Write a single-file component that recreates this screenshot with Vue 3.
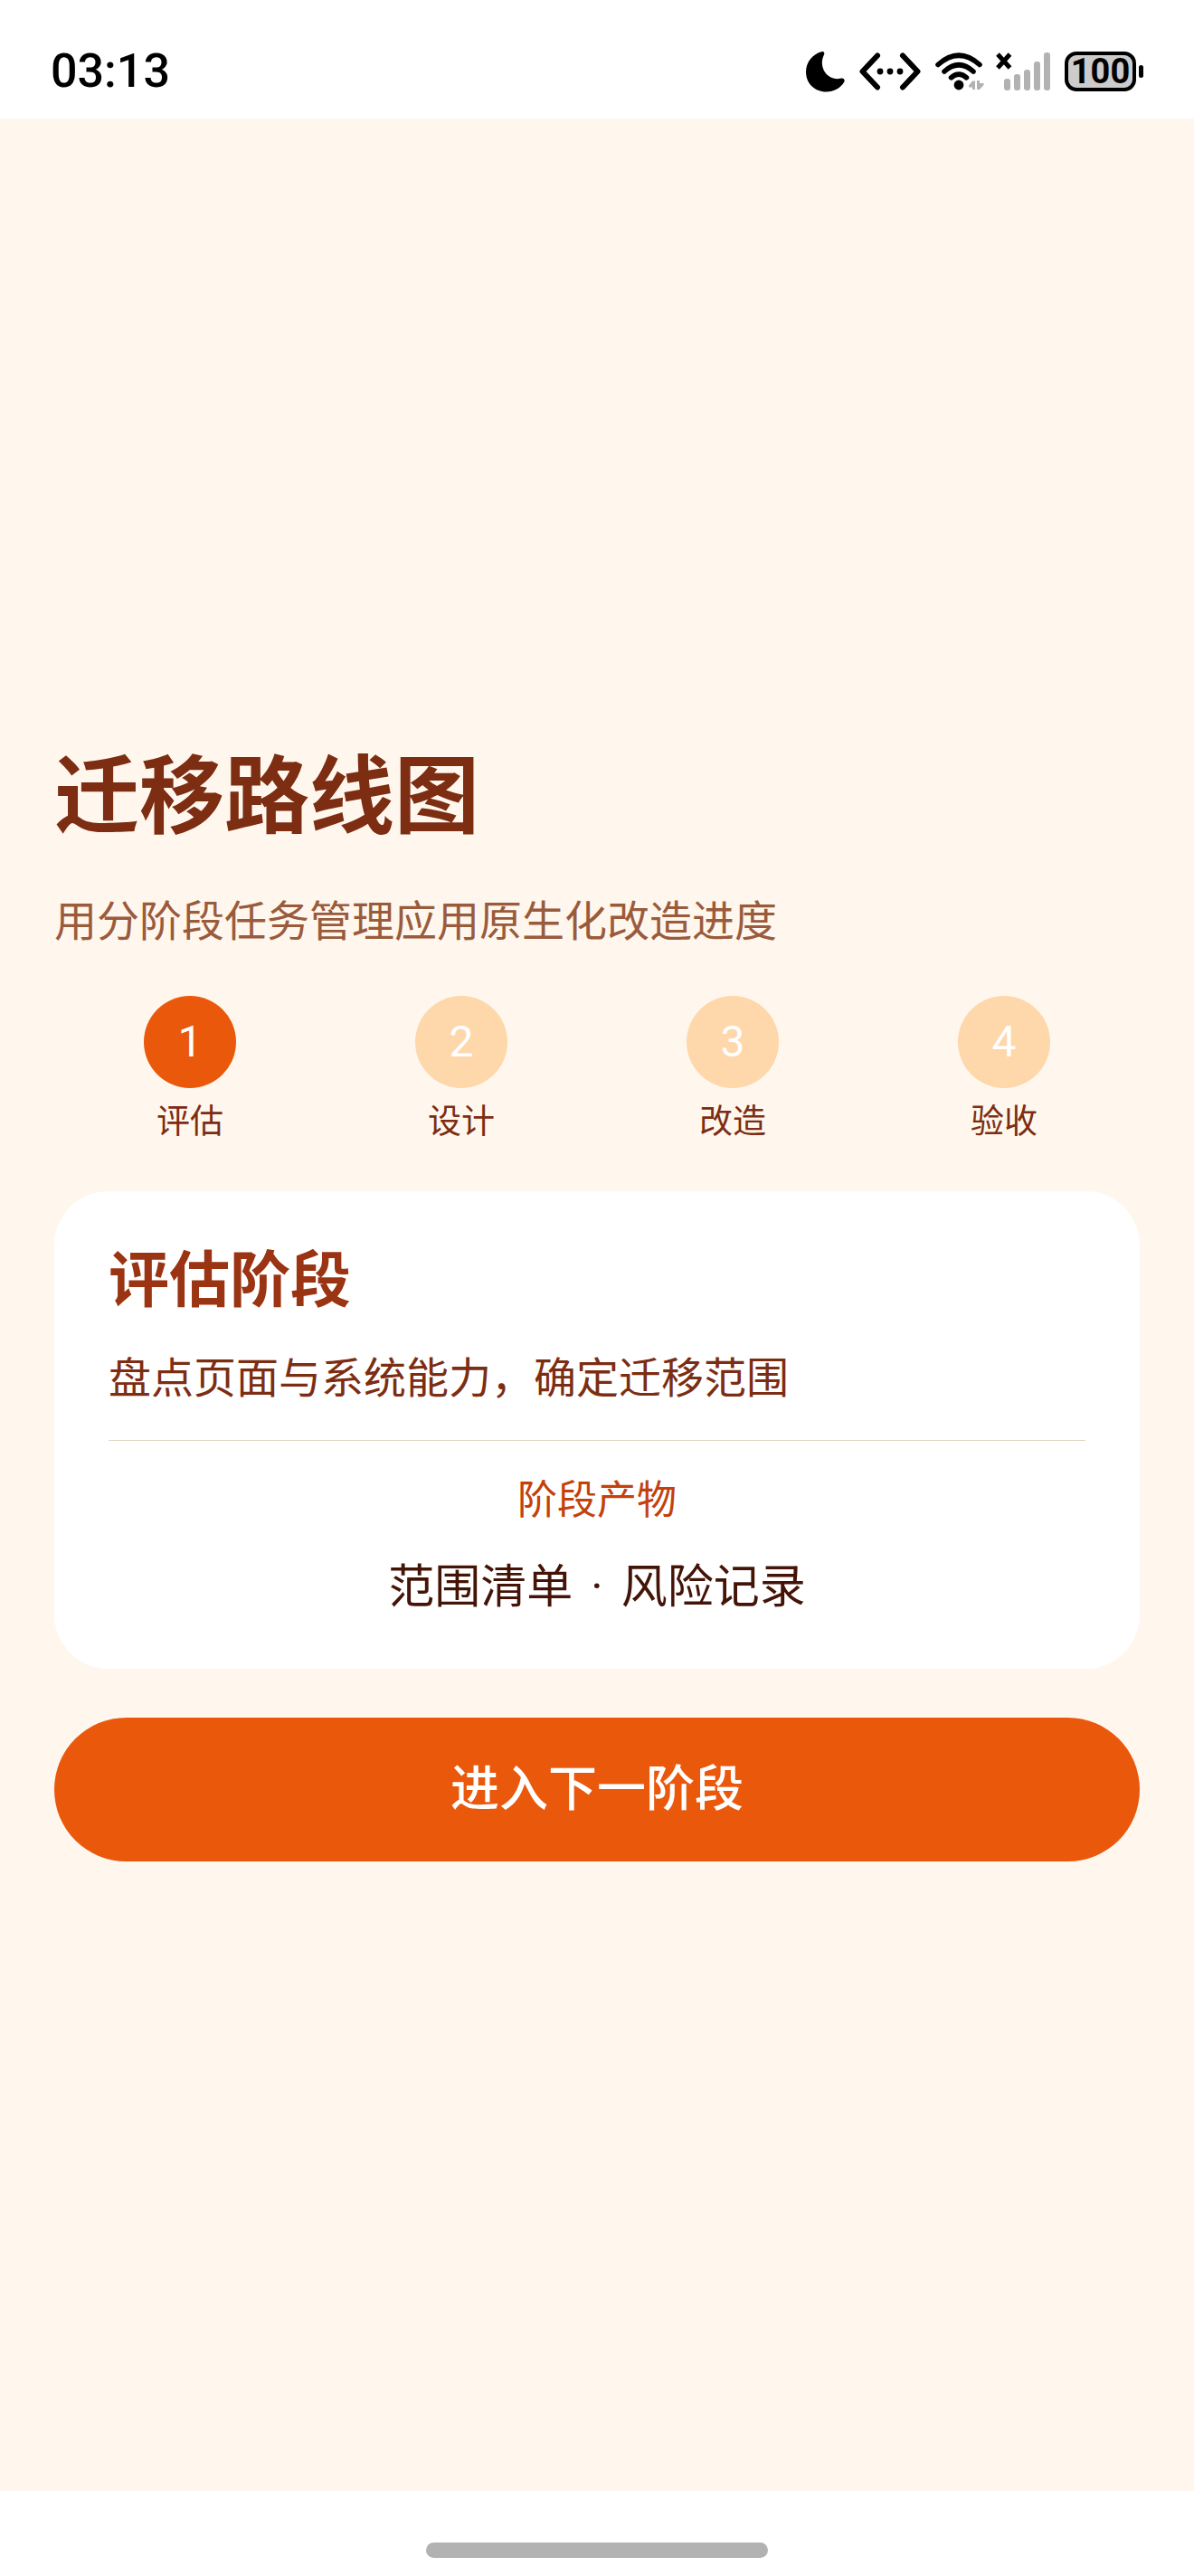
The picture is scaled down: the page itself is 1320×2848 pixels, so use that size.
<script setup>
import { ref, computed } from 'vue'

const stages = [
  { name: '评估', desc: '盘点页面与系统能力，确定迁移范围', outputs: ['范围清单', '风险记录'] },
  { name: '设计', desc: '梳理架构与交互，形成设计方案', outputs: ['架构方案', '交互规范'] },
  { name: '改造', desc: '按模块完成原生化改造', outputs: ['功能代码', '测试用例'] },
  { name: '验收', desc: '验证功能与性能，确认上线', outputs: ['验收报告', '发布清单'] },
]
const current = ref(0)
const stage = computed(() => stages[current.value])

function next() {
  current.value = (current.value + 1) % stages.length
}
</script>

<template>
  <div class="screen">
    <header class="status">
      <time class="clock">03:13</time>
      <div class="indicators">
        <svg class="moon" width="44" height="46" viewBox="0 0 44 46" aria-hidden="true">
          <path d="M18 1.200 C20.500 .3 22 2 21 4.500 C14 19 25 33.500 39 30.800 C42.500 30 44.500 31.800 43.300 34.600 C39.500 41.500 32 45.500 23.500 45.500 C10.500 45.500 1 36 1 23.500 C1 13 8 4 18 1.200Z" />
        </svg>
        <svg class="link" width="68" height="42" viewBox="0 0 68 42" aria-hidden="true">
          <path class="stroke" d="M20 3.500 L3.500 21 L20 38.500 M48 3.500 L64.500 21 L48 38.500" stroke-width="6" />
          <circle cx="23" cy="21" r="3.400" /><circle cx="34" cy="21" r="3.400" /><circle cx="45" cy="21" r="3.400" />
        </svg>
        <svg class="wifi" width="51" height="42" viewBox="0 0 51 42" aria-hidden="true">
          <g class="stroke" stroke-width="5.600">
            <path d="M3 13.500 Q26 -7 49 13.500" />
            <path d="M10 21 Q26 6.500 42 21" />
            <path d="M17.500 27.800 Q26 20.500 34.500 27.800" />
          </g>
          <circle cx="26" cy="36" r="5.400" />
          <path class="muted" d="M41 31.500 H44 V41 H41 V38.500 H37 V36.500Z M46 31 H49 V34 H53.500 V36 L49 41 H46Z" />
        </svg>
        <svg class="signal" width="60" height="42" viewBox="0 0 60 42" aria-hidden="true">
          <path d="M2 2 L15.500 17 M15.500 2 L2 17" stroke="#000" stroke-width="5" />
          <g class="muted">
            <rect x="9" y="29" width="7" height="13" rx="3" />
            <rect x="20" y="24" width="7" height="18" rx="3" />
            <rect x="31" y="19" width="7" height="23" rx="3" />
            <rect x="42" y="10" width="7" height="32" rx="3" />
            <rect x="53" y="0" width="7" height="42" rx="3" />
          </g>
        </svg>
        <div class="battery">
          <span class="level">100</span>
          <span class="nub"></span>
        </div>
      </div>
    </header>

    <main class="content">
      <h1 class="title">迁移路线图</h1>
      <p class="subtitle">用分阶段任务管理应用原生化改造进度</p>

      <ol class="steps">
        <li v-for="(item, i) in stages" :key="item.name" class="step">
          <span class="dot" :class="{ active: i <= current }">{{ i + 1 }}</span>
          <span class="label">{{ item.name }}</span>
        </li>
      </ol>

      <section class="card">
        <h2 class="heading">{{ stage.name }}阶段</h2>
        <p class="desc">{{ stage.desc }}</p>
        <hr class="divider" />
        <p class="caption">阶段产物</p>
        <p class="output">
          <span>{{ stage.outputs[0] }}</span>
          <span>·</span>
          <span>{{ stage.outputs[1] }}</span>
        </p>
      </section>

      <button class="next" type="button" @click="next">进入下一阶段</button>
    </main>

    <footer class="nav"><span class="handle"></span></footer>
  </div>
</template>

<style>
body {
  margin: 0;
  background: #fff;
}
</style>

<style scoped>
.screen {
  display: flex;
  flex-direction: column;
  min-height: 100vh;
  font-family: Roboto, "Noto Sans CJK SC", sans-serif;
  color: #7c2d12;
}

.status {
  display: flex;
  align-items: center;
  justify-content: space-between;
  box-sizing: border-box;
  height: 131px;
  padding: 27px 56px 0;
}

.clock {
  font-size: 52px;
  line-height: 60px;
  font-weight: 500;
  color: #000;
}

.indicators {
  display: flex;
  align-items: center;
  gap: 16px;
}

.wifi {
  overflow: visible;
}

.stroke {
  fill: none;
  stroke: #000;
  stroke-linecap: round;
  stroke-linejoin: round;
}

.muted {
  fill: #b2b2b2;
}

.battery {
  display: flex;
  align-items: center;
  gap: 3px;
}

.level {
  box-sizing: border-box;
  width: 79px;
  height: 44px;
  border: 4px solid #000;
  border-radius: 13px;
  background: #ccc;
  color: #000;
  font-size: 38px;
  line-height: 36px;
  font-weight: 700;
  text-align: center;
}

.nub {
  width: 5px;
  height: 14px;
  border-radius: 3px;
  background: #000;
}

.content {
  flex: 1;
  display: flex;
  flex-direction: column;
  justify-content: center;
  gap: 54px;
  padding: 0 60px;
  background: #fff7ed;
}

.title,
.subtitle,
.heading,
.desc,
.caption,
.output {
  margin: 0;
}

.title {
  font-size: 94px;
  line-height: 110px;
  font-weight: 700;
}

.subtitle {
  font-size: 47px;
  line-height: 56px;
  color: #9a5b3c;
}

.steps {
  display: flex;
  margin: 0;
  padding: 0;
  list-style: none;
}

.step {
  flex: 1;
  display: flex;
  flex-direction: column;
  align-items: center;
  gap: 16px;
}

.dot {
  width: 102px;
  height: 102px;
  border-radius: 50%;
  background: #fed7aa;
  color: #fff;
  font-size: 48px;
  line-height: 102px;
  text-align: center;
}

.dot.active {
  background: #ea580c;
}

.label {
  font-size: 37px;
  line-height: 44px;
}

.card {
  display: flex;
  flex-direction: column;
  gap: 40px;
  padding: 60px;
  border-radius: 60px;
  background: #fff;
}

.heading {
  font-size: 67px;
  line-height: 78px;
  font-weight: 700;
  color: #9a3412;
}

.desc {
  font-size: 47px;
  line-height: 57px;
}

.divider {
  width: 100%;
  height: 1px;
  margin: 0;
  border: 0;
  background: #ddd6c0;
}

.caption {
  font-size: 44px;
  line-height: 52px;
  text-align: center;
  color: #c2410c;
}

.output {
  display: flex;
  justify-content: center;
  gap: 20px;
  font-size: 51px;
  line-height: 60px;
  color: #431407;
}

.next {
  height: 159px;
  padding: 0;
  border: 0;
  border-radius: 80px;
  background: #ea580c;
  color: #fff;
  font-family: inherit;
  font-size: 54px;
  line-height: 64px;
  font-weight: 500;
  cursor: pointer;
}

.nav {
  display: flex;
  align-items: center;
  justify-content: center;
  box-sizing: border-box;
  height: 94px;
  padding-top: 36px;
}

.handle {
  width: 378px;
  height: 17px;
  border-radius: 9px;
  background: #b2b2b2;
}
</style>
